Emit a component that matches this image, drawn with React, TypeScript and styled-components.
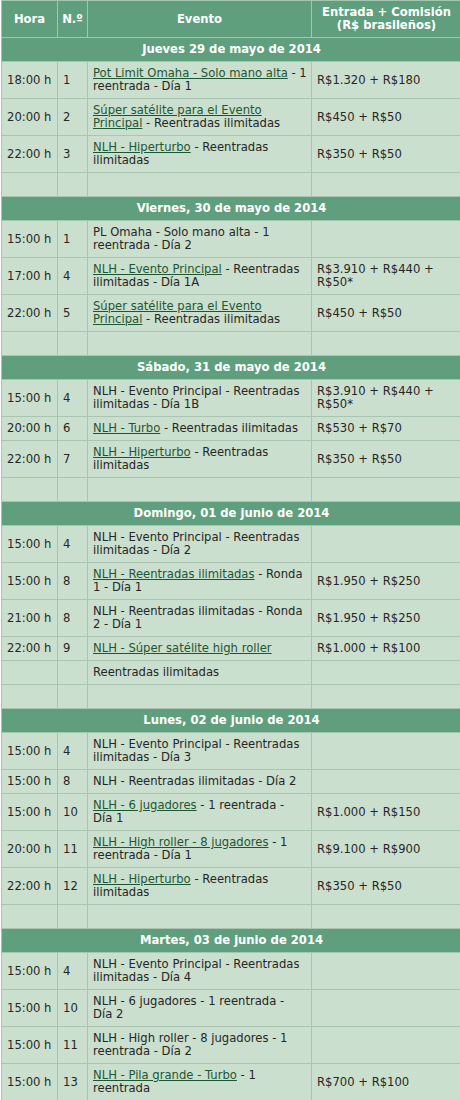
import * as React from 'react'
import styled, { createGlobalStyle } from 'styled-components'

const GlobalStyle = createGlobalStyle`
  html, body {
    margin: 0;
    padding: 0;
    background: #ffffff;
  }
`

type Part = string | { link: string }
type Row = { time?: string; num?: string; event?: Part[]; fee?: string }
type Day = { title: string; rows: Row[] }

const days: Day[] = [
  {
    title: 'Jueves 29 de mayo de 2014',
    rows: [
      { time: '18:00 h', num: '1', event: [{ link: 'Pot Limit Omaha - Solo mano alta' }, ' - 1 reentrada - Día 1'], fee: 'R$1.320 + R$180' },
      { time: '20:00 h', num: '2', event: [{ link: 'Súper satélite para el Evento Principal' }, ' - Reentradas ilimitadas'], fee: 'R$450 + R$50' },
      { time: '22:00 h', num: '3', event: [{ link: 'NLH - Hiperturbo' }, ' - Reentradas ilimitadas'], fee: 'R$350 + R$50' },
      {},
    ],
  },
  {
    title: 'Viernes, 30 de mayo de 2014',
    rows: [
      { time: '15:00 h', num: '1', event: ['PL Omaha - Solo mano alta - 1 reentrada - Día 2'] },
      { time: '17:00 h', num: '4', event: [{ link: 'NLH - Evento Principal' }, ' - Reentradas ilimitadas - Día 1A'], fee: 'R$3.910 + R$440 + R$50*' },
      { time: '22:00 h', num: '5', event: [{ link: 'Súper satélite para el Evento Principal' }, ' - Reentradas ilimitadas'], fee: 'R$450 + R$50' },
      {},
    ],
  },
  {
    title: 'Sábado, 31 de mayo de 2014',
    rows: [
      { time: '15:00 h', num: '4', event: ['NLH - Evento Principal - Reentradas ilimitadas - Día 1B'], fee: 'R$3.910 + R$440 + R$50*' },
      { time: '20:00 h', num: '6', event: [{ link: 'NLH - Turbo' }, ' - Reentradas ilimitadas'], fee: 'R$530 + R$70' },
      { time: '22:00 h', num: '7', event: [{ link: 'NLH - Hiperturbo' }, ' - Reentradas ilimitadas'], fee: 'R$350 + R$50' },
      {},
    ],
  },
  {
    title: 'Domingo, 01 de junio de 2014',
    rows: [
      { time: '15:00 h', num: '4', event: ['NLH - Evento Principal - Reentradas ilimitadas - Día 2'] },
      { time: '15:00 h', num: '8', event: [{ link: 'NLH - Reentradas ilimitadas' }, ' - Ronda 1 - Día 1'], fee: 'R$1.950 + R$250' },
      { time: '21:00 h', num: '8', event: ['NLH - Reentradas ilimitadas - Ronda 2 - Día 1'], fee: 'R$1.950 + R$250' },
      { time: '22:00 h', num: '9', event: [{ link: 'NLH - Súper satélite high roller' }], fee: 'R$1.000 + R$100' },
      { event: ['Reentradas ilimitadas'] },
      {},
    ],
  },
  {
    title: 'Lunes, 02 de junio de 2014',
    rows: [
      { time: '15:00 h', num: '4', event: ['NLH - Evento Principal - Reentradas ilimitadas - Día 3'] },
      { time: '15:00 h', num: '8', event: ['NLH - Reentradas ilimitadas - Día 2'] },
      { time: '15:00 h', num: '10', event: [{ link: 'NLH - 6 jugadores' }, ' - 1 reentrada - Día 1'], fee: 'R$1.000 + R$150' },
      { time: '20:00 h', num: '11', event: [{ link: 'NLH - High roller - 8 jugadores' }, ' - 1 reentrada - Día 1'], fee: 'R$9.100 + R$900' },
      { time: '22:00 h', num: '12', event: [{ link: 'NLH - Hiperturbo' }, ' - Reentradas ilimitadas'], fee: 'R$350 + R$50' },
      {},
    ],
  },
  {
    title: 'Martes, 03 de junio de 2014',
    rows: [
      { time: '15:00 h', num: '4', event: ['NLH - Evento Principal - Reentradas ilimitadas - Día 4'] },
      { time: '15:00 h', num: '10', event: ['NLH - 6 jugadores - 1 reentrada - Día 2'] },
      { time: '15:00 h', num: '11', event: ['NLH - High roller - 8 jugadores - 1 reentrada - Día 2'] },
      { time: '15:00 h', num: '13', event: [{ link: 'NLH - Pila grande - Turbo' }, ' - 1 reentrada'], fee: 'R$700 + R$100' },
    ],
  },
]

const Wrap = styled.div`
  padding-left: 1px;
  width: 459px;
  overflow: hidden;
`

const Table = styled.table`
  width: 460px;
  table-layout: fixed;
  border-collapse: collapse;
  font-family: 'DejaVu Sans', Verdana, sans-serif;
  font-size: 11.6px;
  color: #262626;
`

const HeadCell = styled.th`
  background: #5f9f7e;
  color: #ffffff;
  font-weight: bold;
  text-align: center;
  vertical-align: middle;
  padding: 5px 4px;
  border: 1px solid #a3c6b0;
  line-height: 13px;
  height: 26px;
`

const DayCell = styled.td`
  background: #5f9f7e;
  color: #ffffff;
  font-weight: bold;
  text-align: center;
  padding: 5px 5px;
  border: 1px solid #a3c6b0;
  line-height: 13px;
`

const Cell = styled.td`
  background: #cbdfce;
  padding: 5px 4px 5px 5px;
  border: 1px solid #a9c5b1;
  vertical-align: middle;
  line-height: 13px;
  height: 13px;
  word-wrap: break-word;
`

const EventLink = styled.a`
  color: #1d5632;
  text-decoration: underline;
  cursor: pointer;
`

const renderEvent = (parts?: Part[]) =>
  parts?.map((p, i) =>
    typeof p === 'string' ? <React.Fragment key={i}>{p}</React.Fragment> : <EventLink key={i}>{p.link}</EventLink>
  )

export default function App() {
  return (
    <Wrap>
      <GlobalStyle />
      <Table>
        <colgroup>
          <col style={{ width: 56 }} />
          <col style={{ width: 30 }} />
          <col style={{ width: 224 }} />
          <col style={{ width: 150 }} />
        </colgroup>
        <thead>
          <tr>
            <HeadCell>Hora</HeadCell>
            <HeadCell>N.º</HeadCell>
            <HeadCell>Evento</HeadCell>
            <HeadCell>
              Entrada + Comisión
              <br />
              (R$ brasileños)
            </HeadCell>
          </tr>
        </thead>
        <tbody>
          {days.map((day) => (
            <React.Fragment key={day.title}>
              <tr>
                <DayCell colSpan={4}>{day.title}</DayCell>
              </tr>
              {day.rows.map((r, i) => (
                <tr key={i}>
                  <Cell>{r.time}</Cell>
                  <Cell>{r.num}</Cell>
                  <Cell>{renderEvent(r.event)}</Cell>
                  <Cell>{r.fee}</Cell>
                </tr>
              ))}
            </React.Fragment>
          ))}
        </tbody>
      </Table>
    </Wrap>
  )
}
